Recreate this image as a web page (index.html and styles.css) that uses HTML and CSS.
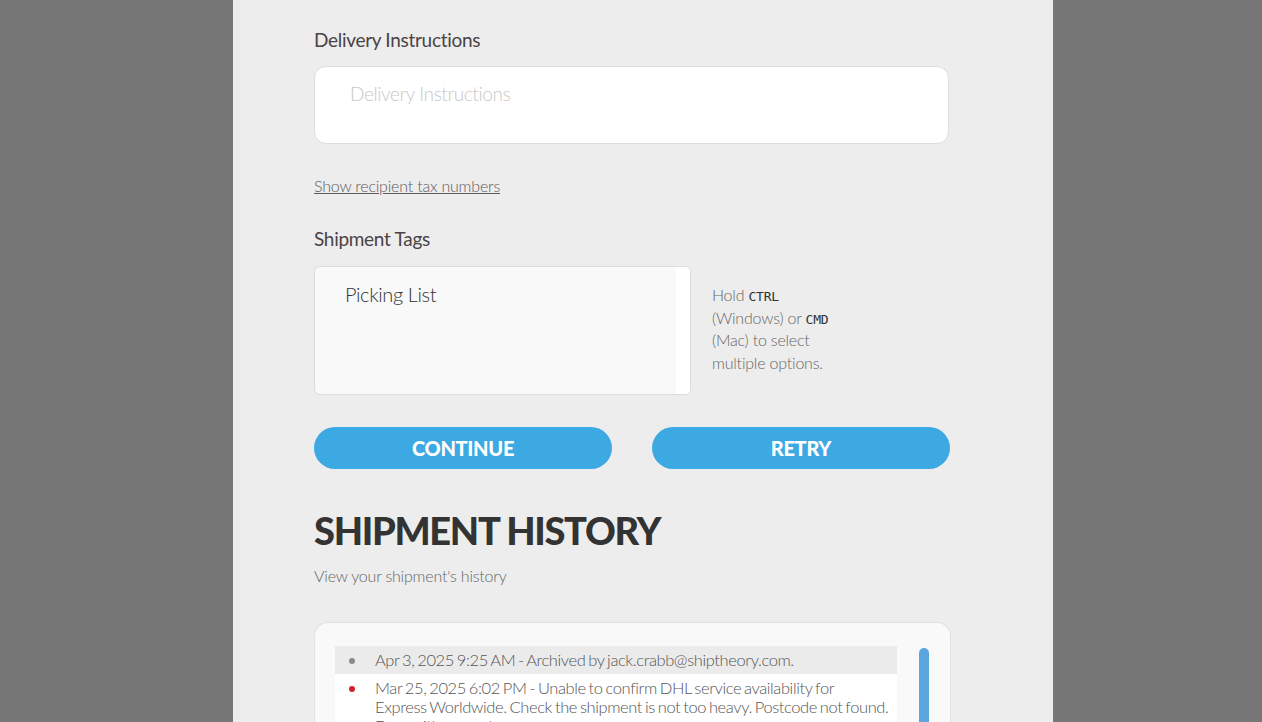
FILE: index.html
```html
<!DOCTYPE html>
<html>
<head>
<meta charset="utf-8">
<link rel="stylesheet" href="styles.css">
</head>
<body>
<div class="page">
  <main class="panel">
    <section class="field">
      <label class="label">Delivery Instructions</label>
      <div class="textarea"><span class="placeholder">Delivery Instructions</span></div>
    </section>
    <a class="link" href="#">Show recipient tax numbers</a>
    <section class="field tags">
      <label class="label">Shipment Tags</label>
      <div class="tags-row">
        <div class="select">
          <div class="option">Picking List</div>
          <div class="select-track"></div>
        </div>
        <p class="help">Hold <code>CTRL</code> (Windows) or <code>CMD</code> (Mac) to select multiple options.</p>
      </div>
    </section>
    <div class="buttons">
      <button class="btn">CONTINUE</button>
      <button class="btn">RETRY</button>
    </div>
    <h1 class="title">SHIPMENT HISTORY</h1>
    <p class="subtitle">View your shipment's history</p>
    <div class="history">
      <ul class="events">
        <li class="event archived"><span class="dot grey"></span><span class="etext">Apr 3, 2025 9:25 AM - Archived by jack.crabb@shiptheory.com.</span></li>
        <li class="event"><span class="dot red"></span><span class="etext">Mar 25, 2025 6:02 PM - Unable to confirm DHL service availability for<br>Express Worldwide. Check the shipment is not too heavy. Postcode not found. Error with request.</span></li>
      </ul>
      <div class="scrollbar"></div>
    </div>
  </main>
</div>
</body>
</html>
```
FILE: styles.css
```css
html, body {
  margin: 0;
  padding: 0;
  height: 100%;
  overflow: hidden;
}
body {
  background: #777777;
  font-family: Lato, "Open Sans", sans-serif;
  font-weight: 300;
}
.page {
  display: flex;
  padding-left: 233px;
  height: 722px;
}
.panel {
  width: 820px;
  background: #ededed;
  box-sizing: border-box;
  padding: 28px 102px 0 81px;
  display: flex;
  flex-direction: column;
}
.label {
  display: block;
  font-size: 19px;
  line-height: 24px;
  color: #4a4345;
  font-weight: 400;
  letter-spacing: -0.3px;
}
.textarea {
  margin-top: 14px;
  width: 635px;
  background: #fff;
  border: 1px solid #dddddd;
  border-radius: 12px;
  padding: 15px 35px;
  box-sizing: border-box;
  height: 78px;
}
.placeholder {
  font-size: 19px;
  color: #c8c8c8;
  letter-spacing: -0.4px;
}
.link {
  margin-top: 32px;
  align-self: flex-start;
  font-size: 16px;
  color: #5f5a5c;
  text-decoration: underline;
  letter-spacing: -0.2px;
}
.tags {
  margin-top: 32px;
}
.tags-row {
  margin-top: 15px;
  display: flex;
  align-items: center;
}
.select {
  width: 377px;
  height: 129px;
  box-sizing: border-box;
  border: 1px solid #dddddd;
  border-radius: 6px;
  background: #f9f9f9;
  display: flex;
  overflow: hidden;
}
.option {
  flex: 1;
  padding: 15px 30px;
  font-size: 20px;
  color: #333;
  letter-spacing: -0.4px;
}
.select-track {
  width: 14px;
  background: #ffffff;
}
.help {
  margin: -3px 0 0 21px;
  width: 140px;
  font-size: 16px;
  line-height: 22.5px;
  color: #666;
  letter-spacing: -0.2px;
}
.help code {
  font-family: "DejaVu Sans Mono", monospace;
  font-size: 13px;
  line-height: 1;
  color: #333;
}
.buttons {
  margin-top: 32px;
  display: flex;
  gap: 40px;
}
.btn {
  width: 298px;
  height: 42px;
  border: none;
  border-radius: 21px;
  background: #3da9e2;
  color: #fff;
  font-family: Lato, sans-serif;
  font-weight: 900;
  font-size: 20px;
  letter-spacing: -0.3px;
}
.title {
  margin: 38px 0 0;
  font-family: Lato, sans-serif;
  font-weight: 900;
  font-size: 38px;
  line-height: 46px;
  color: #333333;
  letter-spacing: -1.3px;
}
.subtitle {
  margin: 13px 0 0;
  font-size: 16px;
  color: #666;
  letter-spacing: -0.2px;
}
.history {
  margin-top: 37px;
  width: 637px;
  height: 120px;
  box-sizing: border-box;
  background: #f9f9f9;
  border: 1px solid #e2e2e2;
  border-radius: 14px 14px 0 0;
  border-bottom: none;
  padding: 23px 21px 0 20px;
  display: flex;
  gap: 22px;
}
.events {
  list-style: none;
  margin: 0;
  padding: 0;
  width: 562px;
}
.event {
  display: flex;
  padding: 5px 0 4px;
  background: #fff;
  font-size: 16.5px;
  line-height: 19px;
  color: #555;
  letter-spacing: -0.4px;
  word-spacing: -1.2px;
}
.etext {
  max-width: 522px;
}
.event.archived {
  background: #ebebeb;
}
.dot {
  width: 6px;
  height: 6px;
  border-radius: 50%;
  margin: 7px 20px 0 14px;
  flex: none;
}
.dot.grey { background: #8a8a8a; }
.dot.red { background: #d0222e; }
.scrollbar {
  width: 10px;
  margin-top: 2px;
  border-radius: 5px 5px 0 0;
  background: #5aa6de;
  flex: none;
}
```
